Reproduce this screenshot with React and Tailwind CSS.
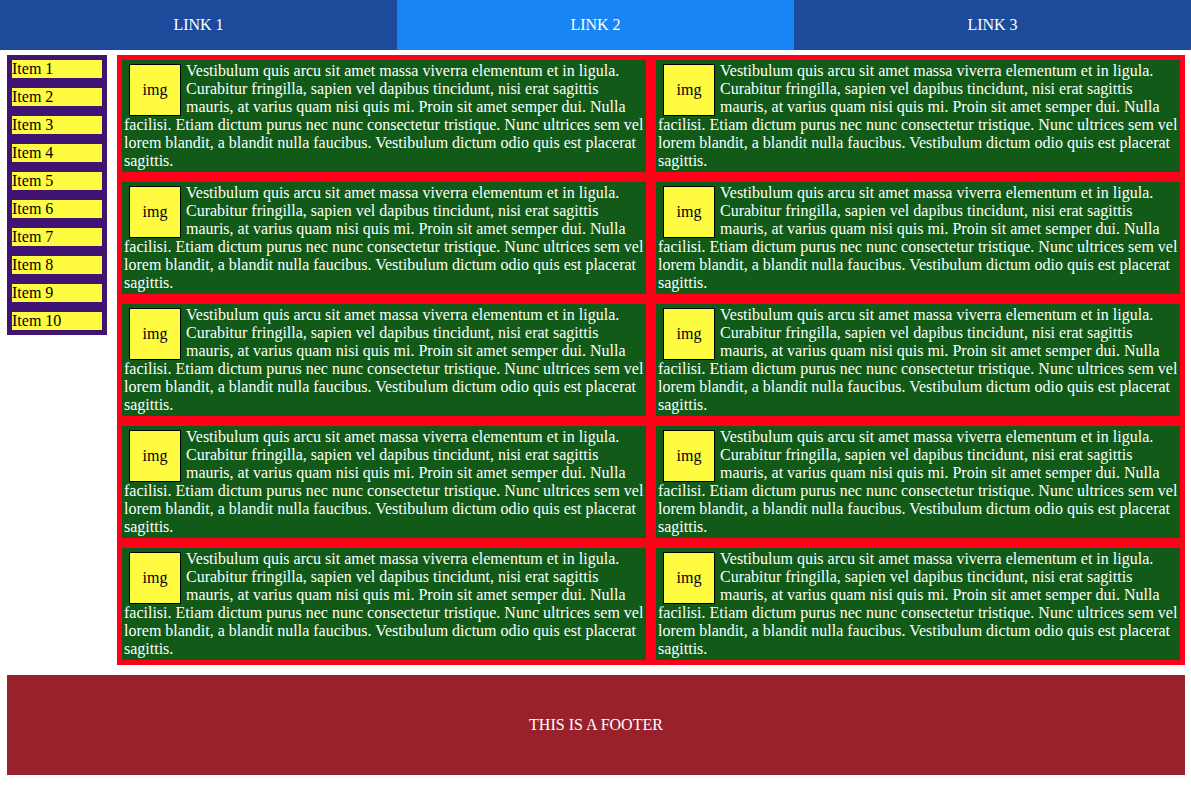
import React from "react";

const TEXT =
  "Vestibulum quis arcu sit amet massa viverra elementum et in ligula. Curabitur fringilla, sapien vel dapibus tincidunt, nisi erat sagittis mauris, at varius quam nisi quis mi. Proin sit amet semper dui. Nulla facilisi. Etiam dictum purus nec nunc consectetur tristique. Nunc ultrices sem vel lorem blandit, a blandit nulla faucibus. Vestibulum dictum odio quis est placerat sagittis.";

function Card() {
  return (
    <div className="bg-[#115a18] text-white p-[2px] h-[112px] overflow-hidden">
      <div className="float-left mt-[2px] mx-[5px] w-[52px] h-[52px] border border-black bg-[#fffb40] text-black flex items-center justify-center">
        img
      </div>
      <p>{TEXT}</p>
    </div>
  );
}

export default function App() {
  const items = Array.from({ length: 10 }, (_, i) => `Item ${i + 1}`);
  return (
    <div className="bg-white min-h-[790px] text-[16px] leading-[18px]" style={{ fontFamily: '"Liberation Serif", "Times New Roman", serif' }}>
      <nav className="grid grid-cols-3 h-[50px] text-white">
        <a className="bg-[#1c4b9b] flex items-center justify-center">LINK 1</a>
        <a className="bg-[#1985f5] flex items-center justify-center">LINK 2</a>
        <a className="bg-[#1c4b9b] flex items-center justify-center">LINK 3</a>
      </nav>
      <div className="pl-[7px] pr-[6px] pt-[5px]">
        <div className="flex gap-[10px] items-start">
          <aside className="w-[100px] bg-[#3f1472] p-[5px] flex flex-col gap-[10px]">
            {items.map((it) => (
              <div key={it} className="bg-[#fffb40] text-black h-[18px]">
                {it}
              </div>
            ))}
          </aside>
          <main className="flex-1 bg-[#ff0019] p-[5px] grid grid-cols-2 gap-[10px]">
            {Array.from({ length: 10 }, (_, i) => (
              <Card key={i} />
            ))}
          </main>
        </div>
        <footer className="mt-[10px] h-[100px] bg-[#98212b] text-white flex items-center justify-center">
          THIS IS A FOOTER
        </footer>
      </div>
    </div>
  );
}
